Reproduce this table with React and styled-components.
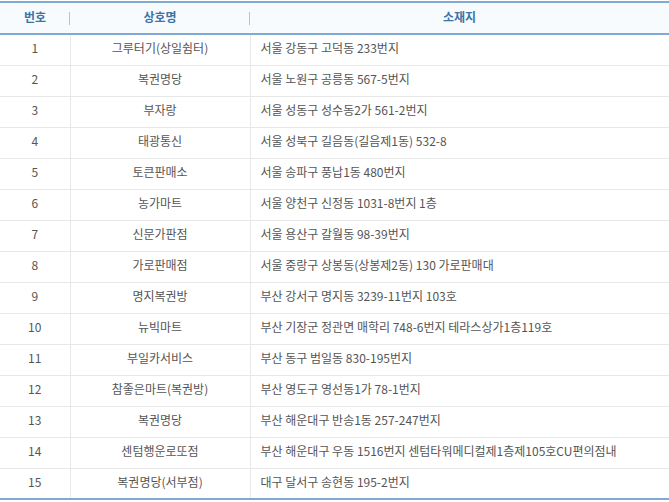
import React from 'react'
import styled, { createGlobalStyle } from 'styled-components'

const rows = [
  ['1', '그루터기(상일쉼터)', '서울 강동구 고덕동 233번지'],
  ['2', '복권명당', '서울 노원구 공릉동 567-5번지'],
  ['3', '부자랑', '서울 성동구 성수동2가 561-2번지'],
  ['4', '태광통신', '서울 성북구 길음동(길음제1동) 532-8'],
  ['5', '토큰판매소', '서울 송파구 풍납1동 480번지'],
  ['6', '농가마트', '서울 양천구 신정동 1031-8번지 1층'],
  ['7', '신문가판점', '서울 용산구 갈월동 98-39번지'],
  ['8', '가로판매점', '서울 중랑구 상봉동(상봉제2동) 130 가로판매대'],
  ['9', '명지복권방', '부산 강서구 명지동 3239-11번지 103호'],
  ['10', '뉴빅마트', '부산 기장군 정관면 매학리 748-6번지 테라스상가1층119호'],
  ['11', '부일카서비스', '부산 동구 범일동 830-195번지'],
  ['12', '참좋은마트(복권방)', '부산 영도구 영선동1가 78-1번지'],
  ['13', '복권명당', '부산 해운대구 반송1동 257-247번지'],
  ['14', '센텀행운로또점', '부산 해운대구 우동 1516번지 센텀타워메디컬제1층제105호CU편의점내'],
  ['15', '복권명당(서부점)', '대구 달서구 송현동 195-2번지'],
]

const GlobalStyle = createGlobalStyle`
  body {
    margin: 0;
    background: #fff;
    font-family: "Noto Sans CJK KR", "Noto Sans", sans-serif;
  }
`

const Table = styled.table`
  width: 669px;
  margin-top: 1px;
  border-collapse: collapse;
  table-layout: fixed;
  border-top: 2px solid #80aad4;
  border-bottom: 2px solid #80aad4;
  font-size: 12px;
  line-height: 16px;
`

const HeadCell = styled.th`
  position: relative;
  height: 32px;
  box-sizing: border-box;
  padding: 0 0 3px;
  background: #f7fbfd;
  border-bottom: 2px solid #80aad4;
  color: #3d74a8;
  font-weight: bold;
  text-align: center;

  &:not(:last-child)::after {
    content: '';
    position: absolute;
    right: 0;
    top: 9px;
    width: 1px;
    height: 13px;
    background: #a9c7e2;
  }
`

const Cell = styled.td`
  height: 31px;
  box-sizing: border-box;
  padding: 0 ${p => (p.$left ? '10px' : '0')} 3px;
  color: #555;
  text-align: ${p => (p.$left ? 'left' : 'center')};
  border-bottom: 1px solid #e8e8e8;
  white-space: nowrap;

  & + & {
    border-left: 1px solid #e8e8e8;
  }
`

const App = () => {
  return (
    <>
      <GlobalStyle />
      <Table>
        <colgroup>
          <col style={{ width: 70 }} />
          <col style={{ width: 180 }} />
          <col />
        </colgroup>
        <thead>
          <tr>
            <HeadCell>번호</HeadCell>
            <HeadCell>상호명</HeadCell>
            <HeadCell>소재지</HeadCell>
          </tr>
        </thead>
        <tbody>
          {rows.map(r => (
            <tr key={r[0]}>
              <Cell>{r[0]}</Cell>
              <Cell>{r[1]}</Cell>
              <Cell $left>{r[2]}</Cell>
            </tr>
          ))}
        </tbody>
      </Table>
    </>
  )
}

export default App
